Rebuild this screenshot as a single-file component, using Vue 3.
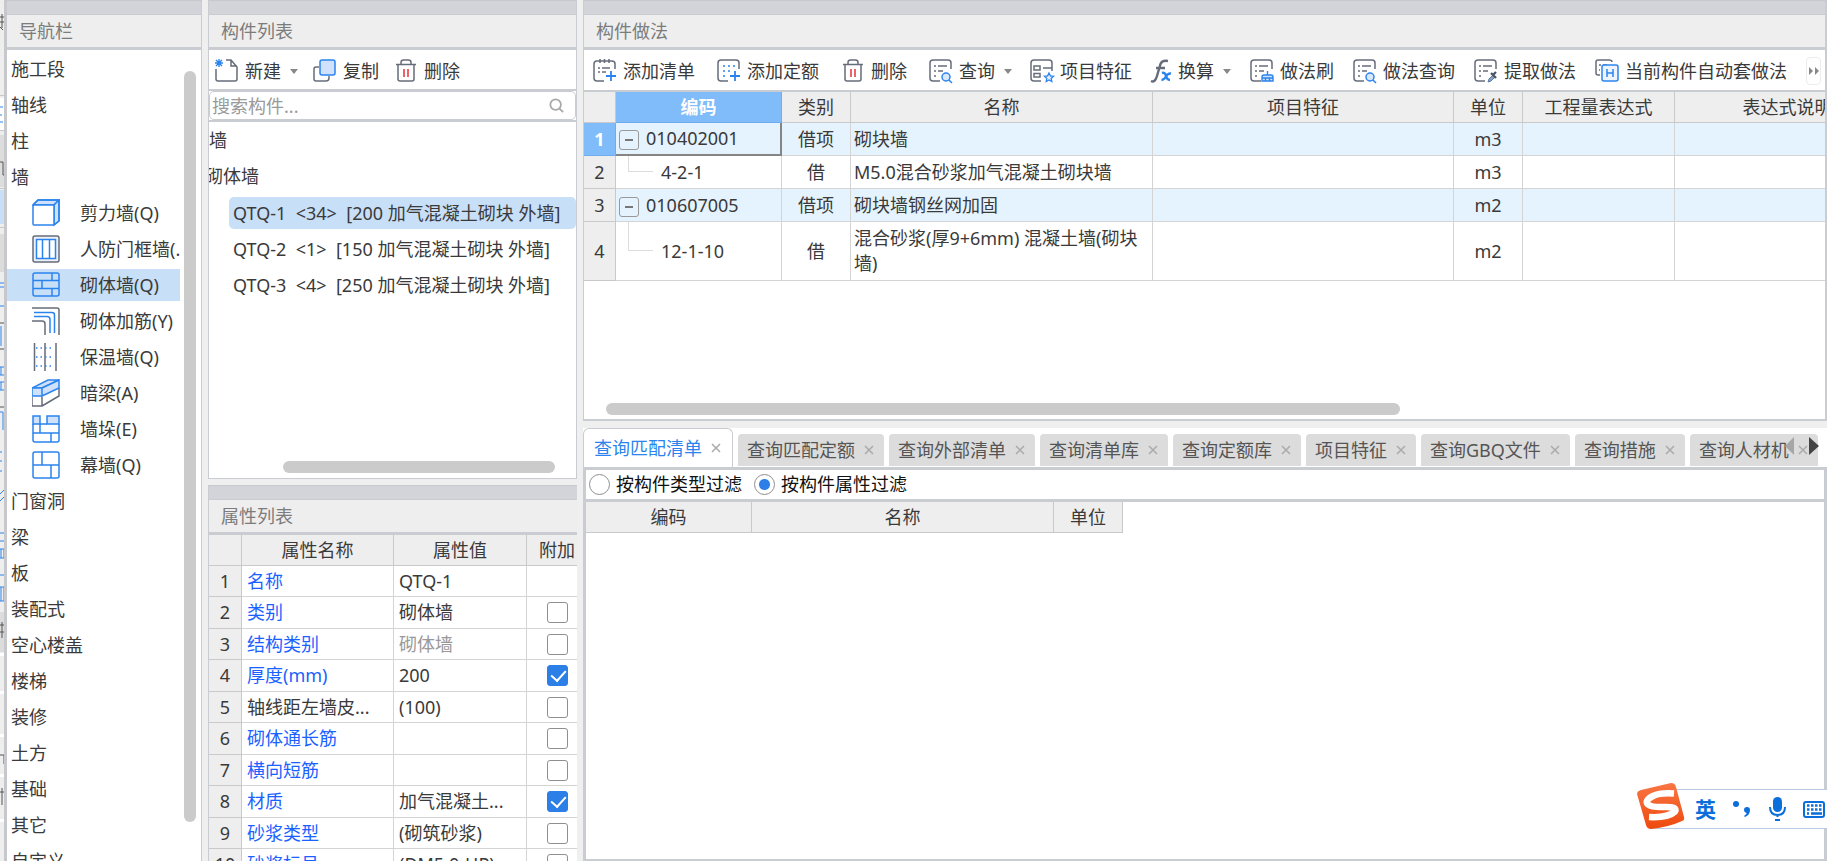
<script setup>
import { ref } from 'vue'

const ink = '#666c7a'
const blue = '#2b84ee'
const pale = '#cfe1fb'

const sheet = `<path d="M11 22H4Q1 22 1 19V4Q1 1 4 1H19Q22 1 22 4V10" stroke="${ink}"/><path d="M5 7H7M9 7H18M5 12H7M9 12H14M5 17H7" stroke="${ink}"/>`

const icons = {
  create: `<path d="M1 10V20Q1 22 3 22H20Q22 22 22 20V8L16 1H11M16 1V7H22" stroke="${ink}"/><path d="M1 1L7 7M7 1L1 7M4 0V8M0 4H8" stroke="${blue}" stroke-width="1.4"/>`,
  copy: `<path d="M6 8H3Q1 8 1 10V20Q1 22 3 22H13Q16 22 16 19V17" stroke="${ink}"/><rect x="7" y="1" width="15" height="15" rx="2" fill="${pale}" stroke="${blue}"/>`,
  remove: `<path d="M2 5.500H22M7 5V3.500Q7 1 9.500 1H14.500Q17 1 17 3.500V5M4 6V20Q4 22 6 22H18Q20 22 20 20V6" stroke="${ink}"/><path d="M10 10V18M14 10V18" stroke="#e8303a"/>`,
  addList: `<path d="M11 22H4Q1 22 1 19V5Q1 2 4 2H19Q22 2 22 5V10M7 0V4M11.500 0V4M16 0V4" stroke="${ink}"/><path d="M5 9H7M9 9H17M5 13H7M9 13H13" stroke="${ink}"/><path d="M18 12V22M13 17H23" stroke="${blue}" stroke-width="1.800"/>`,
  addQuota: `<path d="M11 22H4Q1 22 1 19V4Q1 1 4 1H19Q22 1 22 4V10" stroke="${ink}"/><path d="M6 7H8M11 7H13M16 7H18M6 12H8M11 12H13M6 17H8" stroke="${blue}"/><path d="M18 12V22M13 17H23" stroke="${blue}" stroke-width="1.800"/>`,
  query: `${sheet}<circle cx="17" cy="18" r="4" stroke="${blue}" fill="#d8e8fd"/><path d="M20 21L23 24" stroke="${blue}"/>`,
  feature: `<path d="M11 22H4Q1 22 1 19V4Q1 1 4 1H19Q22 1 22 4V12M13 9H22" stroke="${ink}"/><rect x="4" y="7" width="6" height="4" stroke="${ink}"/><rect x="4" y="14.500" width="6" height="3.500" stroke="${ink}"/><path d="M19 14L20.400 16.900L23.500 17.300L21.200 19.400L21.800 22.500L19 21L16.200 22.500L16.800 19.400L14.500 17.300L17.600 16.900Z" stroke="${blue}" stroke-width="1.300" fill="#e4effd"/>`,
  convert: `<path d="M0 22Q4 24 6 17L9.500 5Q11 1 17 2M5 9H14" stroke="${ink}" stroke-width="2.400"/><path d="M11 14Q14 13 15 17T19 21M20 14.500Q17 14 15 17.500T10.500 21" stroke="${blue}" stroke-width="2.400"/>`,
  brush: `${sheet}<path d="M17.500 12V16M12 22V18Q12 16 14 16H21Q23 16 23 18V22ZM12 19H23M15.500 19V22M19.500 19V22" stroke="${blue}" stroke-width="1.400" fill="${pale}"/>`,
  extract: `${sheet}<path d="M14 23L15 20L19 16L21 18L17 22Z" fill="#8ca3c4" stroke="#5b7ba8" stroke-width="1"/><path d="M17 14L22 19M19 16L22 13" stroke="#4d5563" stroke-width="2.400"/>`,
  auto: `<path d="M5 16H3Q1 16 1 14V3Q1 1 3 1H14Q17 1 17 3M4 6H6M8 6H12M4 11H5" stroke="${ink}"/><rect x="7" y="6" width="16" height="16" rx="2" fill="#edf4fe" stroke="${blue}"/><path d="M12 10V18M18 10V18M12 14H18" stroke="${blue}"/>`,
  shearWall: `<path d="M1 6L6 1H27L22 6Z" fill="${pale}"/><path d="M22 6L27 1V22L22 26Z" fill="${pale}"/><rect x="1" y="6" width="21" height="20" rx="1" fill="#fff"/><path d="M1 6L6 1H26Q27 1 27 2V22L22 26" />`,
  doorWall: `<rect x="1" y="1" width="26" height="26" rx="2" stroke="${ink}" fill="#eef1f6"/><rect x="4.500" y="4.500" width="19" height="19" fill="#fff"/><path d="M10.500 4.500V23.500M17.500 4.500V23.500"/>`,
  masonry: `<rect x="1" y="2" width="26" height="23" rx="2"/><path d="M1 9.500H27M1 17.500H27M20 2V9.500M10 9.500V17.500M20 17.500V25"/>`,
  rebar: `<path d="M0 1H25Q27 1 27 3V28M0 14H10Q13 14 13 17V28" stroke="${ink}"/><path d="M2 5.500H20Q22.500 5.500 22.500 8V26M2 9.500H15Q18 9.500 18 12.500V26"/>`,
  insulation: `<path d="M2.500 0V28M13 0V28M24 0V28" stroke="${ink}"/><path d="M4 5H22M4 14H22M4 23H22" stroke-dasharray="1.500 3"/>`,
  beam: `<path d="M0 18V27H10V18M10 27L27 17V9" stroke="${ink}"/><path d="M0 9L16 1H27L10 9Z" fill="${pale}"/><path d="M0 9H10V17H0ZM10 9L27 1V9L10 17Z" fill="${pale}"/>`,
  pier: `<path d="M1 1H8V9H1ZM15 1H27V9H15Z" fill="${pale}"/><path d="M1 9V25Q1 27 3 27H25Q27 27 27 25V9M8 9H15M1 18H27M8 9V18M19 18V27"/>`,
  curtain: `<rect x="1" y="1" width="26" height="26" rx="2"/><path d="M1 14H27M10 1V14M19 14V27"/>`
}

const selectedNav = ref('砌体墙(Q)')
const navItems = [
  { text: '施工段' }, { text: '轴线' }, { text: '柱' }, { text: '墙' },
  { text: '剪力墙(Q)', icon: 'shearWall' },
  { text: '人防门框墙(.', icon: 'doorWall' },
  { text: '砌体墙(Q)', icon: 'masonry' },
  { text: '砌体加筋(Y)', icon: 'rebar' },
  { text: '保温墙(Q)', icon: 'insulation' },
  { text: '暗梁(A)', icon: 'beam' },
  { text: '墙垛(E)', icon: 'pier' },
  { text: '幕墙(Q)', icon: 'curtain' },
  { text: '门窗洞' }, { text: '梁' }, { text: '板' }, { text: '装配式' },
  { text: '空心楼盖' }, { text: '楼梯' }, { text: '装修' }, { text: '土方' },
  { text: '基础' }, { text: '其它' }, { text: '自定义' }
]

const listTools = [
  { text: '新建', icon: 'create', menu: true },
  { text: '复制', icon: 'copy' },
  { text: '删除', icon: 'remove' }
]

const selectedPart = ref(0)
const parts = [
  'QTQ-1  <34>  [200 加气混凝土砌块 外墙]',
  'QTQ-2  <1>  [150 加气混凝土砌块 外墙]',
  'QTQ-3  <4>  [250 加气混凝土砌块 外墙]'
]

const props = ref([
  { name: '名称', value: 'QTQ-1', blue: true },
  { name: '类别', value: '砌体墙', blue: true, extra: false },
  { name: '结构类别', value: '砌体墙', blue: true, dim: true, extra: false },
  { name: '厚度(mm)', value: '200', blue: true, extra: true },
  { name: '轴线距左墙皮...', value: '(100)', extra: false },
  { name: '砌体通长筋', value: '', blue: true, extra: false },
  { name: '横向短筋', value: '', blue: true, extra: false },
  { name: '材质', value: '加气混凝土...', blue: true, extra: true },
  { name: '砂浆类型', value: '(砌筑砂浆)', blue: true, extra: false },
  { name: '砂浆标号', value: '(DM5.0-HP)', blue: true, extra: false }
])

const methodTools = [
  [
    { text: '添加清单', icon: 'addList' },
    { text: '添加定额', icon: 'addQuota' },
    { text: '删除', icon: 'remove' },
    { text: '查询', icon: 'query', menu: true }
  ],
  [
    { text: '项目特征', icon: 'feature' },
    { text: '换算', icon: 'convert', menu: true, narrow: true },
    { text: '做法刷', icon: 'brush' },
    { text: '做法查询', icon: 'query' },
    { text: '提取做法', icon: 'extract' },
    { text: '当前构件自动套做法', icon: 'auto' }
  ]
]

const methods = [
  { code: '010402001', kind: '借项', name: '砌块墙', unit: 'm3', parent: true },
  { code: '4-2-1', kind: '借', name: 'M5.0混合砂浆加气混凝土砌块墙', unit: 'm3' },
  { code: '010607005', kind: '借项', name: '砌块墙钢丝网加固', unit: 'm2', parent: true },
  { code: '12-1-10', kind: '借', name: '混合砂浆(厚9+6mm) 混凝土墙(砌块墙)', unit: 'm2' }
]

const activeTab = ref('查询匹配清单')
const tabs = ['查询匹配清单', '查询匹配定额', '查询外部清单', '查询清单库', '查询定额库', '项目特征', '查询GBQ文件', '查询措施', '查询人材机']
const filter = ref('prop')
</script>

<template>
  <div class="app">
    <svg class="backdrop" viewBox="0 0 4 861" preserveAspectRatio="xMinYMin slice" aria-hidden="true">
      <rect width="4" height="861" fill="#eeeeee" />
      <rect y="98" width="4" height="32" fill="#fff" />
      <path d="M0 95.500H4M0 130.500H4M0 188.500H4M0 227.500H4" stroke="#c8c8c8" />
      <rect y="135" width="4" height="52" fill="#dddddd" />
      <rect y="190" width="4" height="34" fill="#c8dff8" />
      <rect y="234" width="4" height="38" fill="#dcdcdc" />
      <path d="M0 17H4M2 14V28M0 22H4M0 27L3 30M0 162L3 162V175H4" stroke="#555" fill="none" />
      <path d="M0 107H3M0 115H2M0 122H3M0 283H4M0 287H4M0 306H4" stroke="#2b84ee" />
      <path d="M0 323H4M0 349H4M0 407H4" stroke="#555" />
      <path d="M1 326V346M0 367H4M0 375H4M1 367V375M0 382H4M0 390H4M1 382V390M0 412H3V430" stroke="#2b84ee" fill="none" />
      <path d="M0 452H2M0 461H2M0 471H2M0 494L4 490M0 501L4 497M0 533H4M0 541H4M0 549H4V558H0M1 549V558M0 575H4M0 587H4V601H0M1 587V601" stroke="#2b84ee" fill="none" />
      <rect y="612" width="4" height="40" fill="#dcdcdc" />
      <path d="M0 625H4M2 622V638M0 632H4M0 755H4V764M0 792H4M2 788V805" stroke="#555" fill="none" />
      <path d="M0 654.500H4M0 692.500H4M0 735.500H4M0 775.500H4M0 820.500H4" stroke="#fff" stroke-width="3" />
    </svg>

    <main class="workspace">
      <section class="panel nav">
        <div class="cap"></div>
        <h2>导航栏</h2>
        <div class="nav-body">
          <ul class="nav-list">
            <li v-for="item in navItems" :key="item.text">
              <button class="nav-item" :class="{ child: item.icon, on: item.text === selectedNav }" @click="selectedNav = item.text">
                <svg v-if="item.icon" class="nav-icon" viewBox="0 0 28 28" aria-hidden="true" v-html="icons[item.icon]"></svg>
                <span>{{ item.text }}</span>
              </button>
            </li>
          </ul>
          <div class="vbar"></div>
        </div>
      </section>

      <div class="middle">
        <section class="panel parts">
          <div class="cap"></div>
          <h2>构件列表</h2>
          <div class="toolbar list-tools">
            <button v-for="tool in listTools" :key="tool.text" class="tool">
              <svg class="icon" viewBox="0 0 24 24" aria-hidden="true" v-html="icons[tool.icon]"></svg>
              <span>{{ tool.text }}</span>
              <i v-if="tool.menu" class="caret"></i>
            </button>
          </div>
          <label class="search">
            <input type="text" placeholder="搜索构件..." aria-label="搜索构件" />
            <svg viewBox="0 0 17 17" aria-hidden="true"><circle cx="7.500" cy="7.500" r="6" /><path d="M12 12L16 16" /></svg>
          </label>
          <div class="tree">
            <div class="branch">墙</div>
            <div class="branch clipped"><span>砌体墙</span></div>
            <button v-for="(part, i) in parts" :key="part" class="leaf" :class="{ on: i === selectedPart }" @click="selectedPart = i">{{ part }}</button>
          </div>
          <div class="hbar list-bar"></div>
        </section>

        <section class="panel attributes">
          <div class="cap"></div>
          <h2>属性列表</h2>
          <div class="clip">
            <table class="grid attr-grid">
              <colgroup><col class="w-no" /><col class="w-name" /><col class="w-value" /><col class="w-extra" /></colgroup>
              <thead><tr><th></th><th>属性名称</th><th>属性值</th><th>附加</th></tr></thead>
              <tbody>
                <tr v-for="(row, i) in props" :key="row.name">
                  <th scope="row">{{ i + 1 }}</th>
                  <td :class="{ link: row.blue }">{{ row.name }}</td>
                  <td :class="{ dim: row.dim }">{{ row.value }}</td>
                  <td class="mid"><input v-if="row.extra !== undefined" v-model="row.extra" type="checkbox" :aria-label="row.name + ' 附加'" /></td>
                </tr>
              </tbody>
            </table>
          </div>
        </section>
      </div>

      <div class="right">
        <section class="panel methods">
          <div class="cap"></div>
          <h2>构件做法</h2>
          <div class="toolbar method-tools">
            <div v-for="(group, g) in methodTools" :key="g" class="group" :class="{ tight: g }">
              <button v-for="tool in group" :key="tool.text" class="tool" :class="{ narrow: tool.narrow }">
                <svg class="icon" viewBox="0 0 24 24" aria-hidden="true" v-html="icons[tool.icon]"></svg>
                <span>{{ tool.text }}</span>
                <i v-if="tool.menu" class="caret"></i>
              </button>
            </div>
            <button class="more" aria-label="更多">
              <svg viewBox="0 0 12 8" aria-hidden="true"><path d="M1 0L5 4L1 8ZM7 0L11 4L7 8Z" fill="#888" /></svg>
            </button>
          </div>
          <div class="clip">
            <table class="grid method-grid">
              <colgroup>
                <col class="w-idx" /><col class="w-code" /><col class="w-kind" /><col class="w-title" /><col class="w-spec" />
                <col class="w-kind" /><col class="w-expr" /><col class="w-note" />
              </colgroup>
              <thead>
                <tr><th></th><th class="picked">编码</th><th>类别</th><th>名称</th><th>项目特征</th><th>单位</th><th>工程量表达式</th><th>表达式说明</th></tr>
              </thead>
              <tbody>
                <tr v-for="(row, i) in methods" :key="row.code" :class="{ parent: row.parent, tall: i === 3 }">
                  <th scope="row" :class="{ picked: i === 0 }">{{ i + 1 }}</th>
                  <td class="code" :class="{ current: i === 0 }">
                    <button v-if="row.parent" class="fold" aria-label="折叠"></button>
                    <i v-else class="elbow"></i>
                    <span>{{ row.code }}</span>
                  </td>
                  <td class="mid">{{ row.kind }}</td>
                  <td class="title">{{ row.name }}</td>
                  <td></td>
                  <td class="mid">{{ row.unit }}</td>
                  <td></td>
                  <td></td>
                </tr>
              </tbody>
            </table>
          </div>
          <div class="hbar method-bar"></div>
        </section>

        <section class="lookup">
          <div class="tabs">
            <div v-for="tab in tabs" :key="tab" class="tab" :class="{ on: tab === activeTab }">
              <button class="tab-name" @click="activeTab = tab">{{ tab }}</button>
              <button class="close" :aria-label="'关闭 ' + tab"><svg viewBox="0 0 10 10" aria-hidden="true"><path d="M1 1L9 9M9 1L1 9" /></svg></button>
            </div>
            <div class="tab-scroll">
              <button aria-label="向左"><svg viewBox="0 0 10 18" aria-hidden="true"><path d="M9 0V18L0 9Z" fill="#a6a6a6" /></svg></button>
              <button aria-label="向右"><svg viewBox="0 0 10 18" aria-hidden="true"><path d="M0 0V18L10 9Z" fill="#444" /></svg></button>
            </div>
          </div>
          <div class="lookup-body">
            <div class="filters">
              <label><input v-model="filter" type="radio" name="filter" value="type" />按构件类型过滤</label>
              <label><input v-model="filter" type="radio" name="filter" value="prop" />按构件属性过滤</label>
            </div>
            <table class="grid result-grid">
              <colgroup><col class="w-code" /><col class="w-title" /><col class="w-kind" /></colgroup>
              <thead><tr><th>编码</th><th>名称</th><th>单位</th></tr></thead>
            </table>
          </div>
        </section>
      </div>
    </main>

    <aside class="ime">
      <svg class="ime-logo" viewBox="0 0 48 46" aria-hidden="true">
        <defs><linearGradient id="flame" x1="0" y1="0" x2="0" y2="1"><stop offset="0" stop-color="#f97645" /><stop offset="1" stop-color="#ee4a0d" /></linearGradient></defs>
        <path d="M4 7L34 0Q38 0 39 4L47 34Q48 37 45 38Q32 44 14 46Q10 46 9 42L0 11Q0 8 4 7Z" fill="url(#flame)" />
        <path d="M37 10.500Q23 9.500 16 13Q7 17.500 11 21.500Q15 24.500 27 24Q41 23.500 38 28.500Q31 35 12 34" fill="none" stroke="#fff" stroke-width="6.500" />
      </svg>
      <b>英</b>
      <svg class="ime-punct" viewBox="0 0 17 17" aria-hidden="true"><circle cx="3" cy="3" r="3" /><path d="M14 6Q17 6 17 9Q17 14 12 16L11 15Q14 13 13.500 12Q11 11.500 11 9Q11 6 14 6Z" /></svg>
      <svg class="ime-mic" viewBox="0 0 17 24" aria-hidden="true"><rect x="4" y="0" width="9" height="15" rx="4.500" /><path d="M1 10Q1 18 8.500 18T16 10M8.500 18V20M6 23H11" fill="none" stroke="#0a6edb" stroke-width="2" /></svg>
      <svg class="ime-keys" viewBox="0 0 22 17" aria-hidden="true"><rect x="1" y="1" width="20" height="15" rx="2" fill="#fff" stroke="#0a6edb" stroke-width="2" /><path d="M4 4.500H19M4 8.500H19" stroke="#0a6edb" stroke-width="2.500" stroke-dasharray="2.500 1.500" /><path d="M4 12.500H6M8 12.500H19" stroke="#0a6edb" stroke-width="2.500" /></svg>
    </aside>
  </div>
</template>

<style>
body { margin: 0; }
</style>

<style scoped>
* { box-sizing: border-box; }
.app {
  display: flex;
  height: 100vh;
  overflow: hidden;
  background: #efefef;
  color: #3a3a3a;
  font-family: "Noto Sans", "Noto Sans CJK SC", sans-serif;
  font-size: 18px;
  line-height: 25px;
}
button, input { font: inherit; color: inherit; margin: 0; }
button { background: none; border: 0; padding: 0; text-align: left; white-space: nowrap; }
svg { display: block; flex: none; }
.backdrop { width: 4px; height: 861px; }
.workspace {
  flex: 1;
  min-width: 0;
  display: grid;
  grid-template-columns: 198px 369px minmax(0, 1fr);
  grid-template-rows: 100vh;
  column-gap: 6px;
}
.panel {
  display: flex;
  flex-direction: column;
  min-height: 0;
  min-width: 0;
  overflow: hidden;
  background: #fff;
  border: 0 solid #c9ccd0;
  border-width: 0 1px 1px;
}
.cap { flex: none; height: 15px; background: #d3d4da; border-top: 1px solid #c6c8cb; border-bottom: 1px solid #c9ccd0; }
h2 {
  flex: none;
  margin: 0;
  height: 35px;
  padding: 0 12px;
  background: #eee;
  border-bottom: 3px solid #c9ccd0;
  color: #7c7c7c;
  font-size: 18px;
  font-weight: 400;
  line-height: 32px;
}

.nav { border-left: 3px solid #c6c8cb; border-bottom: 0; }
.nav-body { flex: 1; min-height: 0; display: flex; }
.nav-list { flex: 1; min-width: 0; margin: 0; padding: 1px 0 0; list-style: none; overflow: hidden; }
.nav-list li { height: 36px; padding: 2px 0; }
.nav-item { display: flex; align-items: center; width: 100%; height: 32px; padding-left: 4px; overflow: hidden; }
.nav-item.child { padding-left: 25px; gap: 20px; }
.nav-item.on { background: #c8dff8; }
.nav-icon { width: 28px; height: 28px; fill: none; stroke: #2b84ee; stroke-width: 1.5; }
.vbar { width: 12px; margin: 21px 5px 39px 4px; border-radius: 6px; background: #cbcbcb; }

.middle { display: grid; grid-template-rows: minmax(0, 479fr) minmax(0, 376fr); row-gap: 6px; min-width: 0; }
.toolbar { flex: none; display: flex; align-items: center; height: 41px; padding-top: 3px; border-bottom: 2px solid #c9ccd0; background: #fff; }
.list-tools { padding-left: 6px; gap: 15px; }
.tool { display: flex; align-items: center; }
.icon { width: 24px; height: 24px; margin-right: 6px; overflow: visible; fill: none; stroke-width: 1.5; }
.narrow .icon { margin-right: 3px; }
.caret { margin-left: 9px; border: 4px solid transparent; border-top: 5px solid #888; border-bottom: 0; }
.search { flex: none; display: flex; align-items: center; height: 29px; padding-right: 11px; border: 1px solid #c9ccd0; border-radius: 5px; }
.search input { flex: 1; min-width: 0; height: 27px; padding: 0 2px; border: 0; outline: 0; background: none; }
.search input::placeholder { color: #9a9a9a; opacity: 1; }
.search svg { width: 15px; height: 15px; fill: none; stroke: #a8a8a8; stroke-width: 2; }
.tree { flex: 1; min-height: 0; overflow: hidden; border-top: 2px solid #c9ccd0; }
.branch { display: flex; align-items: center; height: 36px; }
.clipped { justify-content: flex-end; width: 50px; overflow: hidden; }
.clipped span { flex: none; }
.leaf { display: block; width: calc(100% - 20px); height: 32px; margin: 3px 0 4px 20px; padding-left: 4px; border-radius: 5px; line-height: 32px; white-space: pre; }
.leaf.on { background: #c8dff8; }
.hbar { flex: none; height: 12px; border-radius: 6px; background: #cbcbcb; }
.list-bar { margin: 0 21px 5px 74px; }

.clip { flex: 1; min-height: 0; overflow: hidden; }
.grid { border-collapse: separate; border-spacing: 0; table-layout: fixed; width: 0; }
.grid th, .grid td { padding: 0; border: 0 solid #d4d4d4; border-width: 0 1px 1px 0; }
.grid th { background: #eee; border-color: #c9c9c9; font-weight: 400; }
.grid td { white-space: nowrap; overflow: hidden; }
.grid .mid { text-align: center; padding: 0; }
.w-idx { width: 32px; }
.w-no { width: 33px; }
.w-name { width: 152px; }
.w-value { width: 133px; }
.w-extra { width: 61px; }
.w-code { width: 166px; }
.w-kind { width: 69px; }
.w-title { width: 302px; }
.w-spec { width: 301px; }
.w-expr { width: 152px; }
.w-note { width: 226px; }
.attributes { border-bottom: 0; border-right: 0; }
.attr-grid tr { height: 31px; }
.attr-grid tbody tr:nth-child(even) { height: 32px; }
.attr-grid td { padding-left: 5px; }
.attr-grid .link { color: #1a62ff; }
.attr-grid .dim { color: #999; }
input[type="checkbox"] {
  appearance: none;
  display: block;
  width: 21px;
  height: 21px;
  margin: 0 auto;
  border: 1px solid #8f8f8f;
  border-radius: 3px;
  background: #fff;
}
input[type="checkbox"]:checked { background: #2b7fe6; border-color: #2b7fe6; }
input[type="checkbox"]:checked::after {
  content: "";
  display: block;
  width: 7px;
  height: 12px;
  margin: 1px 0 0 6px;
  border: solid #fff;
  border-width: 0 2px 2px 0;
  transform: rotate(42deg);
}

.right { display: grid; grid-template-rows: minmax(0, 421fr) minmax(0, 433fr); row-gap: 7px; min-width: 0; }
.methods { border-right-width: 2px; border-bottom-width: 2px; }
.method-tools { height: 42px; padding: 2px 4px 0 9px; gap: 18px; }
.group { display: flex; gap: 22px; }
.group.tight { gap: 19px; }
.more { display: flex; align-items: center; justify-content: center; width: 15px; height: 28px; margin-left: auto; border: 1px solid #ececec; border-radius: 4px; }
.more svg { width: 12px; height: 8px; }
.method-grid tr { height: 33px; }
.method-grid thead tr { height: 31px; }
.method-grid .tall { height: 59px; }
.method-grid .parent td { background: #e5f3fe; }
.method-grid th.picked { background: #80bbfa; border-color: #6fadef; color: #fff; font-weight: 700; }
.method-grid td.current { border-right: 2px solid #858585; border-bottom: 2px solid #858585; }
.code { position: relative; }
.code span { position: relative; }
.parent .code { padding-left: 3px; }
.fold { position: relative; display: inline-block; width: 20px; height: 20px; margin-right: 7px; vertical-align: middle; border: 1px solid #999; border-radius: 3px; }
.fold::after { content: ""; display: block; width: 8px; height: 2px; margin: 8px auto; background: #777; }
.code:not(:has(.fold)) { padding-left: 45px; }
.elbow { position: absolute; left: 12px; top: 0; width: 25px; height: 50%; border: solid #dcdcdc; border-width: 0 0 1px 1px; }
.grid .title { padding: 0 3px; white-space: normal; }
.method-bar { width: 64%; margin: 0 0 4px 22px; }

.lookup { display: flex; flex-direction: column; min-height: 0; }
.tabs { position: relative; flex: none; display: flex; align-items: flex-end; gap: 5px; height: 39px; overflow: hidden; background: #fff; }
.tab { flex: none; display: flex; align-items: center; height: 32px; margin-bottom: 1px; padding: 0 10px 0 9px; border-radius: 4px 4px 0 0; background: #dcdcdc; color: #555; }
.tab.on { height: 39px; margin-bottom: 0; padding: 0 11px 0 10px; border: 1px solid #c9ccd0; border-bottom: 0; border-radius: 6px 6px 0 0; background: #fff; color: #2b84ee; }
.close { margin-left: 9px; }
.close svg { width: 10px; height: 10px; fill: none; stroke: #aaa; stroke-width: 1.5; }
.tab-scroll { position: absolute; right: 8px; top: 9px; display: flex; gap: 14px; }
.tab-scroll svg { width: 10px; height: 18px; }
.lookup-body { flex: 1; min-height: 0; background: #fff; border: 3px solid #c9ccd0; border-bottom-width: 2px; }
.filters { display: flex; align-items: center; gap: 12px; height: 32px; padding-left: 3px; border-bottom: 3px solid #c9ccd0; color: #111; }
.filters label { display: flex; align-items: center; gap: 6px; }
input[type="radio"] { appearance: none; width: 21px; height: 21px; border: 1px solid #8f8f8f; border-radius: 50%; background: #fff; }
input[type="radio"]:checked { background: radial-gradient(circle, #2b7fe6 5px, #fff 6px); }
.result-grid tr { height: 31px; }

.ime {
  position: fixed;
  right: 0;
  bottom: 32px;
  display: flex;
  align-items: center;
  width: 176px;
  height: 40px;
  padding-left: 44px;
  border: 1px solid #b9cbe3;
  border-width: 1px 0;
  background: #fff;
  color: #0a6edb;
}
.ime svg { fill: #0a6edb; }
.ime-logo { position: absolute; left: -14px; bottom: -1px; width: 48px; height: 46px; }
.ime b { font-size: 21px; }
.ime-punct { width: 17px; height: 17px; margin-left: 17px; }
.ime-mic { width: 17px; height: 24px; margin-left: 19px; }
.ime-keys { width: 22px; height: 17px; margin-left: 17px; }
</style>
